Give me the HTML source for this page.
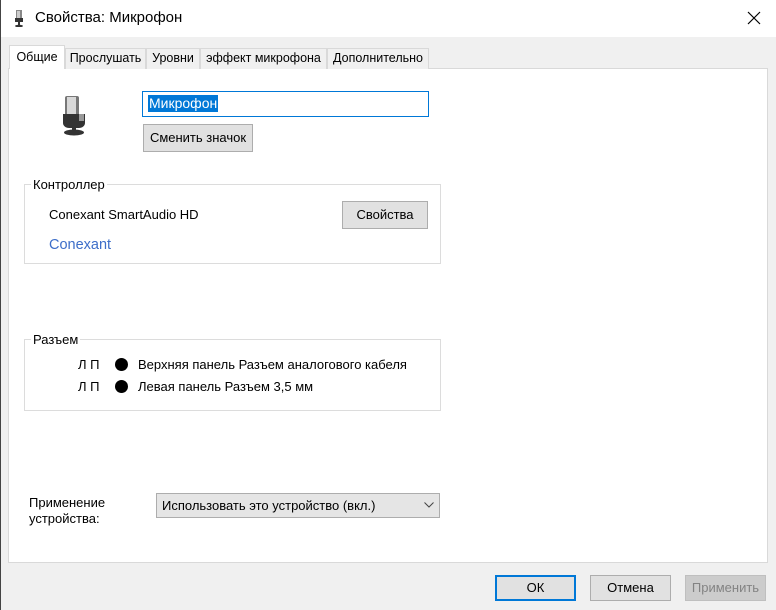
<!DOCTYPE html>
<html><head><meta charset="utf-8"><style>
*{margin:0;padding:0;box-sizing:border-box}
body{width:776px;height:610px;background:#f0f0f0;font-family:"Liberation Sans",sans-serif;font-size:13px;color:#000;position:relative;overflow:hidden}
.a{position:absolute}
.btn{position:absolute;background:#e1e1e1;border:1px solid #adadad;text-align:center;line-height:24px;font-size:13px}
.tab{position:absolute;top:48px;height:21px;border:1px solid #d9d9d9;border-bottom:none;background:#f0f0f0;line-height:19px;text-align:center;font-size:12.5px;white-space:nowrap}
.grp{position:absolute;border:1px solid #dcdcdc}
.lg{position:absolute;background:#fff;padding:0 2px;font-size:13px;line-height:14px}
.dot{position:absolute;width:13px;height:13px;border-radius:50%;background:#000}
</style></head><body>
<div class="a" style="left:0;top:0;width:776px;height:37px;background:#fff"></div>
<div class="a" style="left:0;top:0;width:1px;height:610px;background:#444"></div>
<svg class="a" style="left:14px;top:10px" width="10" height="17" viewBox="0 0 10 17"><rect x="2" y="0" width="6" height="10" fill="#888"/><rect x="3" y="1" width="3" height="8" fill="#ccc"/><rect x="1" y="8" width="8" height="4" fill="#333"/><rect x="4" y="12" width="2" height="3" fill="#333"/><ellipse cx="5" cy="16" rx="4" ry="1.2" fill="#333"/></svg>
<div class="a" style="left:35px;top:9px;font-size:15px">Свойства: Микрофон</div>
<svg class="a" style="left:747px;top:11px" width="14" height="14"><path d="M1 1L13 13M13 1L1 13" stroke="#000" stroke-width="1.2"/></svg>
<div class="a" style="left:8px;top:68px;width:760px;height:495px;background:#fff;border:1px solid #d9d9d9"></div>
<div class="tab" style="left:9px;top:45px;height:24px;width:56px;background:#fff;line-height:23px">Общие</div>
<div class="tab" style="left:65px;width:81px">Прослушать</div>
<div class="tab" style="left:146px;width:54px">Уровни</div>
<div class="tab" style="left:200px;width:127px">эффект микрофона</div>
<div class="tab" style="left:327px;width:102px">Дополнительно</div>
<svg class="a" style="left:62px;top:94px" width="25" height="42" viewBox="0 0 25 42"><rect x="3" y="2" width="14" height="22" rx="2" fill="#777"/><rect x="5" y="3" width="9" height="20" fill="#d8d8d8"/><path d="M1 20h22v9c0 3-3 5-6 5H7c-3 0-6-2-6-5z" fill="#333"/><rect x="17" y="20" width="5" height="7" fill="#999"/><rect x="10" y="33" width="4" height="3" fill="#333"/><ellipse cx="12" cy="38.5" rx="10" ry="3" fill="#333"/></svg>
<div class="a" style="left:142px;top:91px;width:287px;height:26px;border:1px solid #0078d7;background:#fff"></div>
<div class="a" style="left:148px;top:95px;height:17px;background:#0078d7;color:#fff;font-size:14px;line-height:17px;padding:0 1px">Микрофон</div>
<div class="btn" style="left:143px;top:124px;width:110px;height:28px;line-height:26px">Сменить значок</div>
<div class="grp" style="left:24px;top:184px;width:417px;height:80px"></div>
<div class="lg" style="left:31px;top:178px">Контроллер</div>
<div class="a" style="left:49px;top:207px">Conexant SmartAudio HD</div>
<div class="a" style="left:49px;top:237px;color:#3d6ec9;font-size:14.5px">Conexant</div>
<div class="btn" style="left:342px;top:201px;width:86px;height:28px;line-height:26px">Свойства</div>
<div class="grp" style="left:24px;top:339px;width:417px;height:72px"></div>
<div class="lg" style="left:31px;top:333px">Разъем</div>
<div class="a" style="left:78px;top:357px">Л П</div>
<div class="dot" style="left:115px;top:358px"></div>
<div class="a" style="left:138px;top:357px">Верхняя панель Разъем аналогового кабеля</div>
<div class="a" style="left:78px;top:379px">Л П</div>
<div class="dot" style="left:115px;top:380px"></div>
<div class="a" style="left:138px;top:379px">Левая панель Разъем 3,5 мм</div>
<div class="a" style="left:29px;top:495px;line-height:16px">Применение<br>устройства:</div>
<div class="a" style="left:156px;top:493px;width:284px;height:25px;background:#e5e5e5;border:1px solid #adadad;padding-left:5px;line-height:23px">Использовать это устройство (вкл.)</div>
<svg class="a" style="left:424px;top:502px" width="10" height="6"><path d="M0.5 0.5L5 5L9.5 0.5" stroke="#444" fill="none"/></svg>
<div class="btn" style="left:495px;top:575px;width:81px;height:26px;border:2px solid #0078d7;line-height:22px">ОК</div>
<div class="btn" style="left:590px;top:575px;width:81px;height:26px">Отмена</div>
<div class="btn" style="left:685px;top:575px;width:81px;height:26px;background:#cccccc;border-color:#bfbfbf;color:#838383">Применить</div>
</body></html>
